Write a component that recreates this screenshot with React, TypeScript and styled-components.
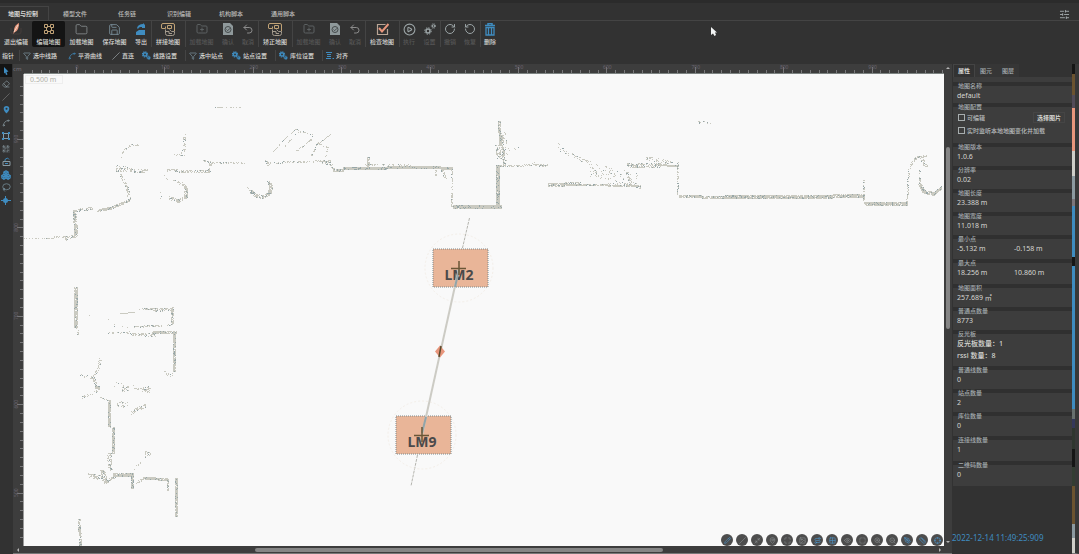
import React from 'react';
import styled, { createGlobalStyle } from 'styled-components';
import {
  PenTool, Pencil, Folder, Save, FolderPlus, Undo2, CirclePlay,
  RotateCcw, RotateCw, Trash2, Filter, Eraser, Slash, MapPin, Spline,
  QrCode, Lasso, SlidersHorizontal, Plus, ZoomIn, ZoomOut, Maximize, Minimize2,
  Ruler as RulerIcon, Crosshair, Eye, Image, Grid2x2, Route, Boxes, SquareDashed,
} from 'lucide-react';

const c = {
  bg: '#323232',
  dark: '#2b2b2b',
  panel: '#3d3d3d',
  line: '#444444',
  text: '#d6d6d2',
  soft: '#a3aaad',
  off: '#565656',
  blue: '#3f8cc0',
  gold: '#c0a276',
  salmon: '#e8967c',
  paper: '#f9f9f9',
};

const GlobalStyle = createGlobalStyle`
  * { box-sizing: border-box; }
  html, body, #root { height: 100%; margin: 0; }
  body {
    background: ${c.bg};
    color: ${c.text};
    font: 7px/8px "Noto Sans", "Noto Sans CJK SC", sans-serif;
    overflow: hidden;
  }
  button {
    background: none; border: 0; padding: 0; margin: 0;
    color: inherit; font: inherit; white-space: nowrap;
  }
  h3, p, ul { margin: 0; padding: 0; font-weight: 400; list-style: none; }
`;

const Page = styled.div`
  display: flex;
  flex-direction: column;
  height: 100%;
  border-top: 3px solid ${c.dark};
`;

const TabBar = styled.header`
  display: flex;
  align-items: flex-end;
  height: 18px;
  border-bottom: 1px solid ${c.line};
`;

const Tab = styled.button<{ $active?: boolean }>`
  width: ${p => (p.$active ? 49 : 52)}px;
  height: 14px;
  padding: ${p => (p.$active ? '1px 2px 0 0' : '2px 0 0')};
  font-size: 6px;
  font-weight: ${p => (p.$active ? 700 : 500)};
  color: ${p => (p.$active ? c.text : '#bdbdba')};
  border: solid ${c.line};
  border-width: ${p => (p.$active ? '1px 1px 0 0' : '0')};
`;

const SettingsButton = styled.button`
  display: flex;
  margin-left: auto;
  padding-right: 9px;
  color: ${c.soft};
`;

const Toolbar = styled.div`
  display: flex;
  height: 26px;
`;

const ToolGroup = styled.div<{ $divided?: boolean }>`
  display: flex;
  ${p => p.$divided && `box-shadow: inset 1px 0 ${c.line};`}
`;

const Tool = styled.button<{ $w: number; $active?: boolean; $off?: boolean }>`
  display: flex;
  flex-direction: column;
  align-items: center;
  justify-content: space-between;
  width: ${p => p.$w}px;
  padding: 2px 0 1px;
  font-size: 6px;
  font-weight: 500;
  color: ${p => (p.$off ? c.off : c.text)};
  background: ${p => (p.$active ? '#141414' : 'transparent')};
  border-radius: 2px;
`;

const SubBar = styled.div`
  display: flex;
  align-items: center;
  height: 17px;
  padding-left: 2px;
  font-size: 6px;
`;

const SubTool = styled.button<{ $w: number }>`
  display: flex;
  align-items: center;
  gap: 2px;
  width: ${p => p.$w}px;
  font-weight: 500;
`;

const Divider = styled.span`
  width: 1px;
  height: 11px;
  margin: 0 3px 0 1px;
  background: ${c.line};
`;

const Work = styled.div`
  display: flex;
  flex: 1;
  min-height: 0;
`;

const SideTools = styled.nav`
  display: flex;
  flex-direction: column;
  width: 13px;
`;

const SideTool = styled.button<{ $active?: boolean }>`
  display: flex;
  align-items: center;
  justify-content: center;
  width: 12px;
  height: 13px;
  color: ${c.blue};
  background: ${p => (p.$active ? '#141414' : 'transparent')};
`;

const Editor = styled.main`
  display: grid;
  grid-template-columns: 11px 1fr 8px;
  grid-template-rows: 10px 1fr 7px;
  flex: 1;
  min-width: 0;
  background: ${c.panel};
  border-bottom: 1px solid #777777;
`;

const Unit = styled.span`
  font-size: 6px;
  line-height: 10px;
  color: #77727a;
`;

const RulerSvg = styled.svg`
  display: block;
  width: 100%;
  height: 100%;
  overflow: hidden;
  min-height: 0;
`;

const CanvasArea = styled.div`
  position: relative;
  min-width: 0;
  min-height: 0;
  overflow: hidden;
  background: ${c.paper};
`;

const Drawing = styled.svg`
  display: block;
  width: 100%;
  height: 100%;
`;

const ScaleLabel = styled.span`
  position: absolute;
  top: 1px;
  left: 1px;
  padding: 0 6px 0 4px;
  color: #b0b0a8;
  border: 1px solid #eeeeee;
  line-height: 7px;
`;

const ViewTools = styled.div`
  position: absolute;
  right: 1px;
  bottom: 0;
  display: flex;
  gap: 3px;
`;

const RoundButton = styled.button<{ $blue?: boolean }>`
  display: flex;
  align-items: center;
  justify-content: center;
  width: 12px;
  height: 12px;
  border-radius: 50%;
  background: #4d4d4d;
  color: ${p => (p.$blue ? '#4d9ad0' : '#8b9193')};
`;

const VScroll = styled.div`
  display: flex;
  flex-direction: column;
  align-items: center;
  justify-content: space-between;
  grid-column: 3;
  grid-row: 1 / 3;
  padding: 2px 0 2px;
`;

const HScroll = styled.div`
  display: flex;
  align-items: center;
  justify-content: space-between;
  grid-column: 1 / 4;
  padding: 0 10px 0 3px;
`;

const Thumb = styled.span<{ $vertical?: boolean }>`
  flex: ${p => (p.$vertical ? '0 0 38%' : '0 0 44%')};
  ${p => (p.$vertical ? 'width: 4px; margin-bottom: 134px;' : 'height: 4px; margin-right: 40px;')}
  border-radius: 2px;
  background: #858585;
`;

const Panel = styled.aside`
  display: flex;
  flex-direction: column;
  width: 120px;
  padding-left: 1px;
`;

const PanelTabs = styled.div`
  display: flex;
  height: 13px;
`;

const PanelTab = styled.button<{ $active?: boolean }>`
  width: 22px;
  font-size: 6px;
  font-weight: ${p => (p.$active ? 700 : 500)};
  color: ${p => (p.$active ? c.text : c.soft)};
  background: ${p => (p.$active ? c.bg : '#363636')};
  border: 1px solid ${p => (p.$active ? c.line : '#363636')};
  border-bottom: 0;
`;

const PanelBody = styled.div`
  flex: 1;
  border-top: 5px solid ${c.panel};
`;

const Section = styled.section<{ $h: number }>`
  min-height: ${p => p.$h}px;
  padding-left: 4px;
  background: linear-gradient(#303030 4px, ${c.panel} 4px);
`;

const SectionTitle = styled.h3`
  font-size: 6px;
  font-weight: 500;
  line-height: 8px;
  padding-left: 1px;
  color: ${c.soft};
`;

const Values = styled.div`
  display: grid;
  grid-template-columns: 57px 1fr;
  line-height: 11px;
`;

const Lines = styled.ul`
  line-height: 12px;
  font-weight: 500;
`;

const CheckRow = styled.div`
  display: flex;
  align-items: center;
  justify-content: space-between;
  height: 13px;
  padding: 0 7px 0 1px;
`;

const CheckLabel = styled.label`
  display: flex;
  align-items: center;
  gap: 2px;
  font-size: 6px;
  font-weight: 500;
  color: #b9bdbd;
  white-space: nowrap;
`;

const Check = styled.input`
  appearance: none;
  width: 7px;
  height: 7px;
  margin: 0;
  border: 1px solid #a7adae;
`;

const PickButton = styled.button`
  height: 11px;
  padding: 0 3px;
  font-size: 6px;
  font-weight: 700;
  border: 1px solid #454545;
`;

const Stamp = styled.time`
  padding-bottom: 12px;
  margin-left: -1px;
  font-size: 8px;
  line-height: 9px;
  color: ${c.blue};
  white-space: nowrap;
`;

const Strip = styled.div`
  width: 7px;
  border-right: 4px solid #383838;
  border-bottom: 1px solid #777777;
  background: linear-gradient(
    #161616 10px, #6b5330 10px 31px, #514b58 31px 44px, ${c.salmon} 44px 87px,
    #cfcfc9 87px 112px, #8c9aa0 112px 135px, #7c777c 135px 142px, ${c.blue} 142px 193px,
    #161616 193px 202px, ${c.blue} 202px 345px, #68706e 345px 355px, #35385a 355px 364px,
    #2f362f 364px 385px, #161616 385px 403px, #333d33 403px 422px, #6b5330 422px 460px,
    #8c9aa0 460px 474px, #cfcfc9 474px
  );
`;

const Pointer = styled.svg`
  position: absolute;
  left: 710px;
  top: 26px;
`;

/* ---------- icons ---------- */

const Gears = ({ size, color }: { size: number; color: string }) => (
  <svg width={size} height={size} viewBox="0 0 24 24" fill="none" stroke={color} aria-hidden>
    <circle cx="8" cy="9" r="4.5" strokeWidth="4" />
    <circle cx="8" cy="9" r="7" strokeWidth="3" strokeDasharray="3 2.5" />
    <circle cx="18" cy="18" r="2.6" strokeWidth="3" />
    <circle cx="18" cy="18" r="4.6" strokeWidth="2" strokeDasharray="2 1.6" />
  </svg>
);

const SparseGears = () => (
  <svg width="12" height="12" viewBox="0 0 12 12" fill="none" stroke="#9ba4a6" aria-hidden>
    <circle cx="4" cy="8" r="2" strokeWidth="1.500" />
    <circle cx="4" cy="8" r="3.300" strokeDasharray="1.300 1.300" />
    <circle cx="9.500" cy="3" r="1.200" />
    <circle cx="9.500" cy="3" r="2.200" strokeDasharray="1 .9" />
  </svg>
);

const GridIcon = () => (
  <svg width="12" height="12" viewBox="0 0 12 12" fill="none" stroke={c.gold} aria-hidden>
    <path d="M1.500 1.500h3v3h-3zM7.500 1.500h3v3h-3zM1.500 7.500h3v3h-3zM7.500 7.500h3v3h-3zM4.500 3.500h3M4.500 8.500h3M3.500 4.500v3M8.500 4.500v3" />
  </svg>
);

const ExitIcon = () => (
  <svg width="12" height="12" viewBox="0 0 12 12" aria-hidden>
    <path d="M1 5v4q0 2 2 2h6q2 0 2-2V5" fill="none" stroke="#443c3a" />
    <path d="M9 0C5 2 4 5 4 8l-1 3 2-2c3-1 4-5 4-9z" fill={c.salmon} />
    <path d="M8 2 4 9" stroke="#f5d9c8" />
  </svg>
);

const ExportIcon = () => (
  <svg width="12" height="12" viewBox="0 0 12 12" fill={c.blue} aria-hidden>
    <path d="M2 5C3 2 5 1 8 1V0l2 2v3L7 5V4C5 4 4 4 3 6zM1 9l3-2h6v5H1z" />
  </svg>
);

const MergeIcon = () => (
  <svg width="14" height="13" viewBox="0 0 14 13" fill="none" strokeWidth="1" aria-hidden>
    <path d="M.5 5V2q0-1.500 1.500-1.500h10q1.500 0 1.500 1.500v6M.5 5.500h4V3.500M6.500 2.500h4v3h-4z" stroke={c.gold} />
    <path d="M4.500 6.500v4q0 2 2 2h5q2 0 2-2v-2h-3l-2-2M5 8.500h3v2h3" stroke="#a39a8c" />
  </svg>
);

const ConfirmIcon = () => (
  <svg width="12" height="12" viewBox="0 0 12 12" aria-hidden>
    <path d="M1 0h7l3 3v9H1z" fill="#8f999b" />
    <circle cx="6" cy="6.500" r="3" fill="none" stroke="#454b4c" />
    <path d="m4.500 6.500 1.200 1.200L8 5.300" fill="none" stroke="#454b4c" />
  </svg>
);

const CheckMapIcon = () => (
  <svg width="13" height="12" viewBox="0 0 13 12" fill="none" aria-hidden>
    <path d="M11.500 6v5.500h-10v-10h8" stroke="#b9a596" strokeWidth="1.200" />
    <path d="m3 5 3 3.500L12.500 1" stroke={c.salmon} strokeWidth="2" />
  </svg>
);

const TrashIcon = () => (
  <svg width="12" height="13" viewBox="0 0 12 13" fill="none" stroke={c.blue} aria-hidden>
    <path d="M1 2.500h10M4 2V.5h4V2" strokeWidth="1.500" />
    <path d="M2 4.500h8v7.500H2zM4.500 4.500V12M7.500 4.500V12" strokeWidth="1.300" />
  </svg>
);

const AlignIcon = () => (
  <svg width="8" height="8" viewBox="0 0 8 8" stroke={c.blue} aria-hidden>
    <path d="M0 .5h6M1 2.500h4M1 4.500h4M0 6.500h5M6.500 6.500H8" />
  </svg>
);

const PointerIcon = () => (
  <svg width="6" height="8" viewBox="0 0 6 8" fill={c.blue} aria-hidden>
    <path d="M1 0l4.500 4.500-2 .5L4.500 7.500 3 8 2.200 5.500 1 6.500z" />
  </svg>
);

const PinIcon = () => (
  <svg width="7" height="9" viewBox="0 0 7 9" aria-hidden>
    <path d="M3.500 1a2.800 2.800 0 0 1 2.800 2.800C6.300 6 3.500 8.500 3.500 8.500S.7 6 .7 3.800A2.800 2.800 0 0 1 3.500 1z" fill={c.blue} />
    <circle cx="3.500" cy="3.800" r="1" fill={c.bg} />
  </svg>
);

const RegionIcon = () => (
  <svg width="8" height="8" viewBox="0 0 8 8" fill="none" aria-hidden>
    <path d="M1.500 1.500h5v5h-5z" stroke="#7f9dae" />
    <path d="M0 0h2v2H0zM6 0h2v2H6zM0 6h2v2H0zM6 6h2v2H6z" fill={c.blue} />
  </svg>
);

const RobotIcon = () => (
  <svg width="9" height="9" viewBox="0 0 9 9" fill="none" aria-hidden>
    <path d="M1 4.500h7v4H1z" stroke="#8b9ba3" />
    <path d="M3 4V2.500L5.500 1 7 2.500M3 6.500h3" stroke={c.blue} />
  </svg>
);

const LocateIcon = () => (
  <svg width="10" height="9" viewBox="0 0 10 9" aria-hidden>
    <circle cx="4.500" cy="4.500" r="2.500" fill={c.blue} />
    <path d="M4.500 0v9M0 4.500h10" stroke={c.blue} />
  </svg>
);

const ArrowTip = ({ d }: { d: string }) => (
  <svg width="4" height="4" viewBox="0 0 4 4" fill="#b5b5b5" aria-hidden><path d={d} /></svg>
);

/* ---------- map data ---------- */

type Wall = [number[], number, number];

// Each wall: polyline vertices in map pixels, thickness, fill density
const walls: Wall[] = [
  [[23, 238, 54, 238], 1, 0.6], [[54, 237, 76, 237], 2, 0.5], [[65, 239, 76, 236], 4, 0.4],
  [[75, 210, 76, 235], 4, 0.75], [[75, 210, 92, 208], 3, 0.6], [[97, 210, 110, 208, 129, 200], 3, 0.75],
  [[129, 200, 127, 188, 120, 174], 3, 0.6], [[116, 170, 147, 171], 4, 0.5], [[116, 166, 130, 168], 2, 0.3],
  [[121, 157, 124, 150, 131, 145, 139, 145], 2, 0.4], [[184, 133, 184, 150], 3, 0.45], [[184, 150, 176, 154], 3, 0.4],
  [[167, 153, 190, 155], 3, 0.08], [[167, 170, 190, 171, 210, 171], 3, 0.6], [[209, 171, 210, 163], 3, 0.6],
  [[202, 160, 212, 163, 244, 163], 2, 0.5], [[169, 198, 178, 201, 186, 197, 186, 188, 182, 184], 4, 0.65],
  [[163, 176, 180, 183], 3, 0.2], [[160, 192, 162, 204], 3, 0.2],
  [[247, 189, 256, 195], 5, 0.25], [[252, 190, 256, 196, 263, 197, 270, 193, 271, 185, 268, 181], 4, 0.65],
  [[212, 107, 242, 107], 1, 0.3], [[273, 151, 284, 139, 296, 128], 1, 0.7], [[284, 147, 296, 133, 307, 130], 2, 0.35],
  [[296, 151, 311, 140, 312, 133], 2, 0.4], [[296, 129, 310, 134], 1, 0.5], [[316, 145, 330, 134], 1, 0.8],
  [[311, 156, 318, 143], 2, 0.35], [[325, 158, 328, 148, 317, 143], 2, 0.4], [[266, 163, 330, 161], 2, 0.45],
  [[266, 160, 268, 165], 3, 0.5], [[322, 162, 330, 163, 333, 169], 3, 0.6], [[333, 170, 343, 170], 3, 0.85],
  [[343, 168, 430, 167, 452, 168], 3, 0.92], [[364, 165, 410, 165], 2, 0.35], [[368, 157, 368, 168], 3, 0.6],
  [[436, 168, 436, 175], 2, 0.6], [[442, 170, 445, 178], 3, 0.4], [[452, 168, 452, 206], 2, 0.4],
  [[453, 207, 501, 207], 4, 0.9], [[498, 165, 498, 208], 4, 0.88], [[499, 121, 500, 145], 3, 0.8],
  [[501, 135, 504, 164], 3, 0.7], [[497, 145, 499, 158], 5, 0.5], [[504, 132, 506, 160], 4, 0.25],
  [[506, 149, 518, 147], 3, 0.2], [[500, 166, 547, 165], 2, 0.6], [[532, 163, 546, 166], 3, 0.3],
  [[558, 143, 562, 151, 574, 156, 590, 162], 5, 0.15], [[588, 160, 600, 180], 4, 0.22], [[590, 170, 638, 180], 14, 0.1],
  [[548, 185, 580, 184], 4, 0.7], [[575, 185, 640, 186], 2, 0.75], [[600, 184, 640, 184], 3, 0.25],
  [[626, 172, 631, 184, 640, 187], 3, 0.5], [[627, 165, 660, 165], 5, 0.6], [[655, 165, 678, 166], 2, 0.85],
  [[645, 158, 672, 163], 4, 0.3], [[678, 160, 678, 194], 2, 0.5], [[679, 196, 725, 197], 3, 0.75],
  [[725, 197, 800, 197], 4, 0.85], [[800, 197, 864, 196], 4, 0.85], [[864, 180, 864, 204], 2, 0.5],
  [[865, 204, 907, 204], 4, 0.85], [[907, 204, 909, 170, 911, 165], 2, 0.55], [[911, 164, 915, 158, 926, 155], 3, 0.6],
  [[921, 159, 926, 166], 5, 0.4], [[920, 168, 920, 185], 2, 0.5], [[920, 184, 924, 192, 934, 194, 941, 188], 4, 0.8],
  [[698, 122, 711, 122], 3, 0.4],
  [[76, 287, 76, 327], 4, 0.82], [[77, 326, 78, 334], 2, 0.5], [[80, 312, 130, 330], 6, 0.02],
  [[120, 313, 134, 312], 1, 1], [[139, 309, 165, 309], 2, 0.55], [[152, 310, 172, 309], 3, 0.45],
  [[172, 307, 172, 324], 3, 0.75], [[134, 327, 170, 325], 2, 0.45], [[107, 333, 150, 334], 2, 0.35],
  [[132, 334, 155, 335], 3, 0.4], [[152, 332, 176, 332], 3, 0.85], [[174, 333, 174, 371], 3, 0.85],
  [[164, 373, 172, 374], 5, 0.3], [[100, 358, 97, 370, 93, 377, 97, 388], 3, 0.5], [[95, 387, 99, 388], 4, 0.9],
  [[80, 375, 93, 377], 3, 0.3], [[82, 397, 97, 391], 3, 0.3], [[100, 397, 108, 400], 1, 0.8],
  [[109, 400, 109, 427], 3, 0.85], [[113, 427, 113, 453], 3, 0.85], [[109, 453, 110, 470], 5, 0.45],
  [[114, 384, 150, 390], 5, 0.2], [[122, 389, 128, 388], 5, 0.5], [[143, 389, 148, 388], 5, 0.5],
  [[117, 404, 127, 405], 6, 0.3], [[131, 413, 137, 409, 145, 406], 4, 0.5], [[134, 468, 150, 452], 3, 0.25],
  [[145, 453, 150, 454], 4, 0.5], [[88, 475, 103, 478], 5, 0.35], [[102, 470, 106, 483], 5, 0.7],
  [[106, 481, 115, 476], 3, 0.75], [[113, 475, 133, 475], 4, 0.85], [[132, 475, 132, 488], 3, 0.8],
  [[136, 482, 145, 478], 3, 0.5], [[143, 478, 168, 479], 3, 0.8], [[168, 479, 168, 490], 2, 0.7],
  [[176, 478, 176, 516], 3, 0.85], [[79, 519, 80, 545], 3, 0.7],
];

function buildCloud(list: Wall[]) {
  let seed = 7;
  const rnd = () => {
    seed = (seed * 16807) % 2147483647;
    return seed / 2147483647;
  };
  let base = '';
  let accent = '';
  const used = new Set<string>();
  list.forEach(([pts, thick, density]) => {
    const fill = density > 0.6 ? density * 1.1 : density;
    for (let i = 0; i + 3 < pts.length; i += 2) {
      const [x1, y1, x2, y2] = pts.slice(i, i + 4);
      const dx = x2 - x1;
      const dy = y2 - y1;
      const n = Math.max(Math.abs(dx), Math.abs(dy), 1);
      const flat = Math.abs(dx) >= Math.abs(dy);
      for (let s = 0; s <= n; s++) {
        for (let t = 0; t < thick; t++) {
          if (rnd() > fill) continue;
          const off = t - Math.floor(thick / 2);
          const x = Math.round(x1 + (dx * s) / n) + (flat ? 0 : off);
          const y = Math.round(y1 + (dy * s) / n) + (flat ? off : 0);
          const key = `${x},${y}`;
          if (used.has(key)) continue;
          used.add(key);
          const dot = `M${x} ${y}h1v1h-1z`;
          if (rnd() < 0.16) accent += dot;
          else base += dot;
        }
      }
    }
  });
  return { base, accent };
}

const cloud = buildCloud(walls);

const Station = ({ x, y, name }: { x: number; y: number; name: string }) => (
  <g>
    <circle cx={x} cy={y} r="34" fill="none" stroke="#f4efe9" strokeDasharray="2 2" />
    <rect x={x - 26} y={y - 19} width="55" height="38" fill="#e9b598" />
    <rect x={x - 26} y={y - 19} width="55" height="38" fill="none" stroke="#7f8a8c" strokeDasharray="1 1" />
    <text x={x} y={y + 12} textAnchor="middle" fontFamily="Noto Sans" fontWeight="700" fontSize="14" fill="#4b4a4b">{name}</text>
  </g>
);

const MapDrawing = () => (
  <Drawing role="img" aria-label="地图">
    <g transform="translate(-24 -74)">
      <g shapeRendering="crispEdges">
        <path d={cloud.base} fill="#cacac1" />
        <path d={cloud.accent} fill="#98a7a8" />
      </g>
      <path d="M469.500 218 462 250M417.500 455 411 486" stroke="#b5b5af" strokeDasharray="3 1" />
      <Station x={459} y={268} name="LM2" />
      <Station x={422} y={435} name="LM9" />
      <path d="M459 268 422 435" stroke="#cccbc4" strokeWidth="2" />
      <path d="M459 270 455 287M426 417 422 433" stroke="#93a4a8" strokeWidth="2" />
      <path d="M451 268.500h15M459 261v14M414 435.500h15M422 427v15" stroke="#6a5636" strokeWidth="1.500" />
      <path d="m440 345.500 5 6-5 6-5-6z" fill={c.salmon} />
      <path d="m441 346-2 11" stroke="#5a4a2c" strokeWidth="1.500" />
    </g>
  </Drawing>
);

const STEP = 88.4;
const TICKS = Array.from({ length: 220 }, (_, i) => i - 6);

// Ticks grow from the edge that touches the map
const tickPath = (origin: number, edge: number, horizontal: boolean) =>
  TICKS.map(i => {
    const p = Math.round(origin + (i * STEP) / 10) + 0.5;
    const len = i % 10 === 0 ? 7 : 4;
    return horizontal ? `M${p} ${edge - len}V${edge}` : `M${edge - len} ${p}H${edge}`;
  }).join('');

const TopRuler = () => (
  <RulerSvg aria-hidden>
    <path d={tickPath(52, 10, true)} stroke="#78787a" />
    <path d="M0 9.500H4000" stroke="#7d8482" />
    {Array.from({ length: 10 }, (_, i) => (
      <text key={i} x={53 + i * STEP} y="5" fontSize="5" textAnchor="middle" fill="#6b6570">{i * 100}</text>
    ))}
  </RulerSvg>
);

const LeftRuler = () => (
  <RulerSvg aria-hidden>
    <path d={tickPath(65, 11, false)} stroke="#78787a" />
    <path d="M10.500 0V3000" stroke="#9a9a9a" />
    {Array.from({ length: 5 }, (_, i) => (
      <text key={i} transform={`translate(5 ${65 + i * STEP}) rotate(-90)`} fontSize="5" textAnchor="middle" fill="#6b6570">
        {900 - i * 100}
      </text>
    ))}
  </RulerSvg>
);

/* ---------- content ---------- */

type ToolDef = { label: string; icon: React.ReactNode; w: number; active?: boolean; off?: boolean };

const undo = <Undo2 size={12} color="#8d8d8d" />;
const mapPlus = <FolderPlus size={12} color="#5c6162" />;
const importSet: ToolDef[] = [
  { label: '加载地图', icon: mapPlus, w: 33, off: true },
  { label: '确认', icon: <ConfirmIcon />, w: 20, off: true },
  { label: '取消', icon: undo, w: 20, off: true },
];

const toolGroups: ToolDef[][] = [
  [
    { label: '编辑地图', icon: <GridIcon />, w: 33, active: true },
    { label: '加载地图', icon: <Folder size={13} strokeWidth={1.5} color="#8a9092" />, w: 33 },
    { label: '保存地图', icon: <Save size={13} strokeWidth={1.5} color="#7e94a0" />, w: 33 },
    { label: '导出', icon: <ExportIcon />, w: 20 },
  ],
  [{ label: '拼接地图', icon: <MergeIcon />, w: 34 }],
  importSet,
  [{ label: '矫正地图', icon: <MergeIcon />, w: 34 }],
  importSet,
  [{ label: '检查地图', icon: <CheckMapIcon />, w: 34 }],
  [
    { label: '执行', icon: <CirclePlay size={13} color="#9ba4a6" />, w: 20, off: true },
    { label: '设置', icon: <SparseGears />, w: 21, off: true },
  ],
  [
    { label: '撤销', icon: <RotateCw size={12} color="#9ba4a6" />, w: 20, off: true },
    { label: '恢复', icon: <RotateCcw size={12} color="#9ba4a6" />, w: 20, off: true },
  ],
  [{ label: '删除', icon: <TrashIcon />, w: 20 }],
];

const filter = <Filter size={8} color="#7f97a5" />;
const gears = <Gears size={9} color={c.blue} />;
const subTools: (ToolDef | null)[] = [
  { label: '指针', icon: null, w: 16 },
  null,
  { label: '选中线路', icon: filter, w: 45 },
  { label: '平滑曲线', icon: <Spline size={8} color={c.blue} />, w: 44 },
  { label: '直连', icon: <Slash size={8} color={c.soft} />, w: 30 },
  { label: '线路设置', icon: gears, w: 42 },
  null,
  { label: '选中站点', icon: filter, w: 43 },
  { label: '站点设置', icon: gears, w: 42 },
  null,
  { label: '库位设置', icon: gears, w: 42 },
  null,
  { label: '对齐', icon: <AlignIcon />, w: 30 },
];

const sideTools: [string, React.ReactNode][] = [
  ['选择', <PointerIcon />],
  ['橡皮', <Eraser size={8} color="#8b9ba3" />],
  ['画线', <Slash size={8} color="#7a7a7a" />],
  ['站点', <PinIcon />],
  ['曲线', <Spline size={8} color="#8b9ba3" />],
  ['区域', <RegionIcon />],
  ['二维码', <QrCode size={8} color="#8b9ba3" />],
  ['车辆', <RobotIcon />],
  ['库位', <Boxes size={10} strokeWidth={3} />],
  ['套索', <Lasso size={9} color="#77909c" />],
  ['定位', <LocateIcon />],
];

const viewTools: [string, typeof Plus, boolean?][] = [
  ['编辑', Pencil, true], ['画笔', Slash], ['对齐', Minimize2], ['原点', MapPin], ['全图', Maximize],
  ['图片', Image], ['路线', Route, true], ['网格', Grid2x2, true], ['可见', Eye], ['选区', SquareDashed],
  ['放大', ZoomIn], ['缩小', ZoomOut], ['笔', PenTool, true], ['标尺', RulerIcon, true], ['添加', Crosshair, true],
];

const infoBefore: [string, string[], number][] = [
  ['地图版本', ['1.0.6'], 23], ['分辨率', ['0.02'], 23], ['地图长度', ['23.388 m'], 23], ['地图宽度', ['11.018 m'], 23],
  ['最小点', ['-5.132 m', '-0.158 m'], 24], ['最大点', ['18.256 m', '10.860 m'], 25],
  ['地图面积', ['257.689 ㎡'], 23], ['普通点数量', ['8773'], 23],
];
const infoAfter: [string, string[], number][] = [
  ['普通线数量', ['0'], 23], ['站点数量', ['2'], 23], ['库位数量', ['0'], 24], ['连接线数量', ['1'], 25], ['二维码数量', ['0'], 25],
];

const Info = ({ title, values, h }: { title: string; values: string[]; h: number }) => (
  <Section $h={h}>
    <SectionTitle>{title}</SectionTitle>
    <Values>{values.map(v => <span key={v}>{v}</span>)}</Values>
  </Section>
);

export default function App() {
  return (
    <>
      <GlobalStyle />
      <Page>
        <TabBar>
          {['地图与控制', '模型文件', '任务链', '识别编辑', '机构脚本', '通用脚本'].map((t, i) => (
            <Tab key={t} $active={i === 0}>{t}</Tab>
          ))}
          <SettingsButton aria-label="设置"><SlidersHorizontal size={11} /></SettingsButton>
        </TabBar>

        <Toolbar>
          <ToolGroup>
            <Tool $w={32}><ExitIcon />退出编辑</Tool>
          </ToolGroup>
          {toolGroups.map((group, g) => (
            <ToolGroup key={g} $divided={g > 0}>
              {group.map((t, i) => (
                <Tool key={i} $w={t.w} $active={t.active} $off={t.off} disabled={t.off}>{t.icon}{t.label}</Tool>
              ))}
            </ToolGroup>
          ))}
        </Toolbar>

        <SubBar>
          {subTools.map((t, i) => (t ? <SubTool key={i} $w={t.w}>{t.icon}{t.label}</SubTool> : <Divider key={i} />))}
        </SubBar>

        <Work>
          <SideTools>
            {sideTools.map(([name, icon], i) => (
              <SideTool key={name} $active={i === 0} aria-label={name}>{icon}</SideTool>
            ))}
          </SideTools>

          <Editor>
            <Unit>cm</Unit>
            <TopRuler />
            <VScroll>
              <ArrowTip d="M0 3h4L2 1z" />
              <Thumb $vertical />
              <ArrowTip d="M0 1h4L2 3z" />
            </VScroll>
            <LeftRuler />
            <CanvasArea>
              <MapDrawing />
              <ScaleLabel>0.500 m</ScaleLabel>
              <ViewTools>
                {viewTools.map(([name, Icon, blue]) => (
                  <RoundButton key={name} $blue={blue} aria-label={name}><Icon size={7} /></RoundButton>
                ))}
              </ViewTools>
            </CanvasArea>
            <HScroll>
              <ArrowTip d="M3 0v4L1 2z" />
              <Thumb />
              <ArrowTip d="M1 0v4l2-2z" />
            </HScroll>
          </Editor>

          <Panel>
            <PanelTabs>
              <PanelTab $active>属性</PanelTab>
              <PanelTab>图元</PanelTab>
              <PanelTab>图层</PanelTab>
            </PanelTabs>
            <PanelBody>
              <Info title="地图名称" values={['default']} h={21} />
              <Section $h={40}>
                <SectionTitle>地图配置</SectionTitle>
                <CheckRow>
                  <CheckLabel><Check type="checkbox" />可编辑</CheckLabel>
                  <PickButton>选择图片</PickButton>
                </CheckRow>
                <CheckRow>
                  <CheckLabel><Check type="checkbox" />实时监听本地地图变化并加载</CheckLabel>
                </CheckRow>
              </Section>
              {infoBefore.map(([t, v, h]) => <Info key={t} title={t} values={v} h={h} />)}
              <Section $h={36}>
                <SectionTitle>反光板</SectionTitle>
                <Lines>
                  <li>反光板数量：1</li>
                  <li>rssi 数量：8</li>
                </Lines>
              </Section>
              {infoAfter.map(([t, v, h]) => <Info key={t} title={t} values={v} h={h} />)}
            </PanelBody>
            <Stamp>2022-12-14 11:49:25:909</Stamp>
          </Panel>
          <Strip />
        </Work>
      </Page>
      <Pointer width="8" height="11" viewBox="0 0 8 11" aria-hidden>
        <path d="M1 1v8l2-1.500L4.500 10 6 9 5 6.500h2z" fill="#f2f4f4" />
      </Pointer>
    </>
  );
}
